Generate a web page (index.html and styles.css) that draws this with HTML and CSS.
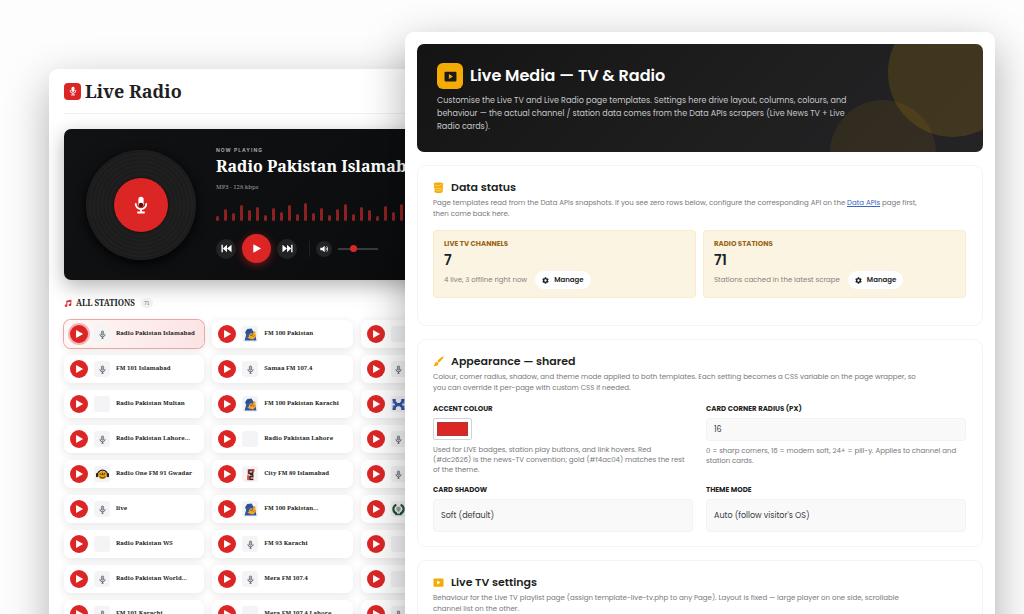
FILE: index.html
```html
<!DOCTYPE html>
<html lang="en">
<head>
  <meta charset="UTF-8" />
  <title>Live Media — TV &amp; Radio</title>
  <meta name="viewport" content="width=device-width, initial-scale=1.0"/>
  <link rel="stylesheet" href="styles.css">
</head>
<body>
  <!-- shared icons -->
  <svg class="sprite" aria-hidden="true">
    <symbol id="mic" viewBox="0 0 24 24"><rect x="8.5" y="1" width="7" height="13" rx="3.5" fill="currentColor"/><path d="M5 10.500a7 7 0 0 0 14 0M12 17.500V21M8 22h8" fill="none" stroke="currentColor" stroke-width="2.500" stroke-linecap="round"/><circle cx="12" cy="12" r="3" fill="#4a1717"/></symbol>
    <symbol id="mic-small" viewBox="0 0 24 24"><rect x="8.5" y="2" width="7" height="12" rx="3.5" fill="currentColor"/><path d="M5 10.500a7 7 0 0 0 14 0M12 17.500V21M8 21.500h8" fill="none" stroke="currentColor" stroke-width="2" stroke-linecap="round"/></symbol>
    <symbol id="mic-line" viewBox="0 0 24 24"><rect x="9" y="2.500" width="6" height="11.500" rx="3" fill="#a9adb4" stroke="currentColor" stroke-width="1.800"/><path d="M5 11a7 7 0 0 0 14 0M12 18v4M9 22h6" fill="none" stroke="currentColor" stroke-width="2.400"/></symbol>
    <symbol id="play" viewBox="0 0 24 24"><path d="M5 2.500v19L22 12z" fill="currentColor"/></symbol>
    <symbol id="prev" viewBox="0 0 24 24"><path d="M1 4h3v16H1zM13 4v16L4 12zM23 4v16l-10-8z" fill="currentColor"/></symbol>
    <symbol id="next" viewBox="0 0 24 24"><path d="M20 4h3v16h-3zM11 4v16l9-8zM1 4v16l10-8z" fill="currentColor"/></symbol>
    <symbol id="volume" viewBox="0 0 24 24"><path d="M1 8h6l7-6v20l-7-6H1z" fill="currentColor"/><path d="M17 8c2.500 2 2.500 6 0 8M20 4c4 4 4 12 0 16" fill="none" stroke="currentColor" stroke-width="2.500"/></symbol>
    <symbol id="music" viewBox="0 0 24 24"><path d="M7 5l15-3v15.500a4 3.500 0 1 1-3-3.400V8l-9 2v10a4 3.500 0 1 1-3-3.400z" fill="currentColor"/></symbol>
    <symbol id="tv" viewBox="0 0 24 24"><path fill-rule="evenodd" d="M3 3h18a2 2 0 0 1 2 2v14a2 2 0 0 1-2 2H3a2 2 0 0 1-2-2V5a2 2 0 0 1 2-2zm6 4.500v9l7.500-4.500z" fill="currentColor"/></symbol>
    <symbol id="gear" viewBox="0 0 24 24"><path fill-rule="evenodd" d="M9.500 1h5l.6 3 2.300 1.300 2.900-1 2.500 4.300L20.500 11v2l2.300 2.400-2.500 4.300-2.900-1-2.300 1.300-.6 3h-5l-.6-3-2.300-1.300-2.900 1-2.500-4.300L3.500 13v-2L1.200 8.600l2.500-4.300 2.900 1L8.900 4zM12 8a4 4 0 1 0 0 8 4 4 0 0 0 0-8z" fill="currentColor"/></symbol>
    <symbol id="database" viewBox="0 0 24 24"><path d="M1 4C2 1 20 0 23 4l-2 4 1 4-1 4v5c-1 4-17 4-18 0l1-5-2-4 1-4z" fill="#f4ac04"/><path d="M5 6l6 3 8-4M5 13c4 2 10 2 14 0M6 18c4 2 8 2 12 0" fill="none" stroke="#fff0c4" stroke-width="1.300"/></symbol>
    <symbol id="brush" viewBox="0 0 24 24"><path d="M22.500 1.500c1.500 1.500-5 9-9.500 13l-3.500-3.500c4-4.500 11.500-11 13-9.500zM8.500 12.500l3.500 3.500c0 5-6 7-11 6 3-2 2-8 7.500-9.500z" fill="#f4ac04"/></symbol>
    <symbol id="fm100" viewBox="0 0 24 24"><path d="M1 23l3-10-2-5 4-6 8-1 3 5 3 3 3 14z" fill="#2857a5"/><path d="M9 12l4-3 2 2 5-6 2 4-2 2 3 2-3 5-3 3-7-1-4-3 3-1z" fill="#f6a623"/><path d="M10 12l3 2 4-2M5 7l5-2M17 16l2-2" fill="none" stroke="#40342a" stroke-width="1.200"/></symbol>
    <symbol id="radio-one" viewBox="0 0 24 24"><path d="M3 13a9 9 0 0 1 18 0" fill="none" stroke="#222" stroke-width="2.500"/><ellipse cx="12" cy="13" rx="8.500" ry="7.500" fill="#e2a11c"/><rect x="0" y="9" width="4" height="8" rx="2" fill="#222"/><rect x="20" y="9" width="4" height="8" rx="2" fill="#222"/><path d="M7 10l3 3M14 13l3-4M7 16c3 3 7 3 10 0M12 9v4" fill="none" stroke="#4a3209" stroke-width="1.800"/></symbol>
    <symbol id="city89" viewBox="0 0 24 24"><path d="M6 2h13v5l-3 4 2 3v9H6z" fill="#f9a69c"/><path d="M17 4H9v6h7V6M11 12h5v4h-5v5h6" fill="none" stroke="#2b2b2b" stroke-width="2.600"/><path d="M6 14h3v8H6zM16 2h3v5h-3z" fill="#e23c2e"/></symbol>
    <symbol id="hum" viewBox="0 0 24 24"><path d="M1 2h6v4l3 3h4l3-3V2h6v4l-4 4v4l4 4v4h-6v-4l-3-3h-4l-3 3v4H1v-4l4-4v-4L1 6z" fill="#3557a8"/><path d="M1 9h4M1 15h4M19 9h4M19 15h4" stroke="#3557a8" stroke-width="2"/></symbol>
    <symbol id="crest" viewBox="0 0 24 24"><path d="M8 3C0 7 1 17 9 20M16 3c8 4 7 14-1 17" fill="none" stroke="#24543a" stroke-width="4"/><path d="M8 7h8v6l-4 4-4-4z" fill="#8fa697"/><path d="M6 21h12" stroke="#24543a" stroke-width="3"/></symbol>
  </svg>

  <div class="stage">
    <section class="radio">
      <header class="radio-head">
        <span class="radio-logo"><svg><use href="#mic-small"/></svg></span>
        <h1>Live Radio</h1>
      </header>

      <div class="player">
        <div class="disc"><div class="disc-label"><svg><use href="#mic"/></svg></div></div>
        <div class="player-info">
          <p class="now">NOW PLAYING</p>
          <h2>Radio Pakistan Islamabad</h2>
          <p class="bitrate">MP3 · 128 kbps</p>
          <div class="bars">
            <i style="height:5px"></i><i style="height:12px"></i><i style="height:8px"></i><i style="height:16px"></i><i style="height:11px"></i><i style="height:14px"></i><i style="height:6px"></i><i style="height:13px"></i><i style="height:9px"></i><i style="height:16px"></i><i style="height:7px"></i><i style="height:18px"></i><i style="height:8px"></i><i style="height:13px"></i><i style="height:6px"></i><i style="height:12px"></i><i style="height:17px"></i><i style="height:7px"></i><i style="height:14px"></i><i style="height:11px"></i><i style="height:5px"></i><i style="height:15px"></i><i style="height:9px"></i><i style="height:17px"></i>
          </div>
          <div class="controls">
            <button class="round" aria-label="Previous"><svg><use href="#prev"/></svg></button>
            <button class="round round-play" aria-label="Play"><svg><use href="#play"/></svg></button>
            <button class="round" aria-label="Next"><svg><use href="#next"/></svg></button>
            <span class="divider"></span>
            <button class="round round-small" aria-label="Mute"><svg><use href="#volume"/></svg></button>
            <input class="volume" type="range" min="0" max="100" value="35" aria-label="Volume">
          </div>
        </div>
      </div>

      <h3 class="stations-title"><svg><use href="#music"/></svg>ALL STATIONS <span>71</span></h3>
      <div class="stations">
        <div class="station active"><button aria-label="Play"><svg><use href="#play"/></svg></button><span class="thumb"><svg><use href="#mic-line"/></svg></span><b>Radio Pakistan Islamabad</b></div>
        <div class="station"><button aria-label="Play"><svg><use href="#play"/></svg></button><span class="thumb logo"><svg><use href="#fm100"/></svg></span><b>FM 100 Pakistan</b></div>
        <div class="station"><button aria-label="Play"><svg><use href="#play"/></svg></button><span class="thumb"></span></div>

        <div class="station"><button aria-label="Play"><svg><use href="#play"/></svg></button><span class="thumb"><svg><use href="#mic-line"/></svg></span><b>FM 101 Islamabad</b></div>
        <div class="station"><button aria-label="Play"><svg><use href="#play"/></svg></button><span class="thumb"><svg><use href="#mic-line"/></svg></span><b>Samaa FM 107.4</b></div>
        <div class="station"><button aria-label="Play"><svg><use href="#play"/></svg></button><span class="thumb"><svg><use href="#mic-line"/></svg></span></div>

        <div class="station"><button aria-label="Play"><svg><use href="#play"/></svg></button><span class="thumb"></span><b>Radio Pakistan Multan</b></div>
        <div class="station"><button aria-label="Play"><svg><use href="#play"/></svg></button><span class="thumb logo"><svg><use href="#fm100"/></svg></span><b>FM 100 Pakistan Karachi</b></div>
        <div class="station"><button aria-label="Play"><svg><use href="#play"/></svg></button><span class="thumb logo"><svg><use href="#hum"/></svg></span></div>

        <div class="station"><button aria-label="Play"><svg><use href="#play"/></svg></button><span class="thumb"><svg><use href="#mic-line"/></svg></span><b>Radio Pakistan Lahore...</b></div>
        <div class="station"><button aria-label="Play"><svg><use href="#play"/></svg></button><span class="thumb"></span><b>Radio Pakistan Lahore</b></div>
        <div class="station"><button aria-label="Play"><svg><use href="#play"/></svg></button><span class="thumb"><svg><use href="#mic-line"/></svg></span></div>

        <div class="station"><button aria-label="Play"><svg><use href="#play"/></svg></button><span class="thumb logo"><svg><use href="#radio-one"/></svg></span><b>Radio One FM 91 Gwadar</b></div>
        <div class="station"><button aria-label="Play"><svg><use href="#play"/></svg></button><span class="thumb logo"><svg><use href="#city89"/></svg></span><b>City FM 89 Islamabad</b></div>
        <div class="station"><button aria-label="Play"><svg><use href="#play"/></svg></button><span class="thumb"><svg><use href="#mic-line"/></svg></span></div>

        <div class="station"><button aria-label="Play"><svg><use href="#play"/></svg></button><span class="thumb"><svg><use href="#mic-line"/></svg></span><b>live</b></div>
        <div class="station"><button aria-label="Play"><svg><use href="#play"/></svg></button><span class="thumb logo"><svg><use href="#fm100"/></svg></span><b>FM 100 Pakistan...</b></div>
        <div class="station"><button aria-label="Play"><svg><use href="#play"/></svg></button><span class="thumb logo"><svg><use href="#crest"/></svg></span></div>

        <div class="station"><button aria-label="Play"><svg><use href="#play"/></svg></button><span class="thumb"></span><b>Radio Pakistan WS</b></div>
        <div class="station"><button aria-label="Play"><svg><use href="#play"/></svg></button><span class="thumb"><svg><use href="#mic-line"/></svg></span><b>FM 93 Karachi</b></div>
        <div class="station"><button aria-label="Play"><svg><use href="#play"/></svg></button><span class="thumb"></span></div>

        <div class="station"><button aria-label="Play"><svg><use href="#play"/></svg></button><span class="thumb"><svg><use href="#mic-line"/></svg></span><b>Radio Pakistan World...</b></div>
        <div class="station"><button aria-label="Play"><svg><use href="#play"/></svg></button><span class="thumb"><svg><use href="#mic-line"/></svg></span><b>Mera FM 107.4</b></div>
        <div class="station"><button aria-label="Play"><svg><use href="#play"/></svg></button><span class="thumb"></span></div>

        <div class="station"><button aria-label="Play"><svg><use href="#play"/></svg></button><span class="thumb"><svg><use href="#mic-line"/></svg></span><b>FM 101 Karachi</b></div>
        <div class="station"><button aria-label="Play"><svg><use href="#play"/></svg></button><span class="thumb"></span><b>Mera FM 107.4 Lahore</b></div>
        <div class="station"><button aria-label="Play"><svg><use href="#play"/></svg></button><span class="thumb"><svg><use href="#mic-line"/></svg></span></div>
      </div>
    </section>

    <main class="admin">
      <header class="hero">
        <div class="hero-title">
          <span class="hero-icon"><svg><use href="#tv"/></svg></span>
          <h1>Live Media — TV &amp; Radio</h1>
        </div>
        <p>Customise the Live TV and Live Radio page templates. Settings here drive layout, columns, colours, and<br>behaviour — the actual channel / station data comes from the Data APIs scrapers (Live News TV + Live<br>Radio cards).</p>
      </header>

      <section class="card card-status">
        <h2><svg><use href="#database"/></svg>Data status</h2>
        <p class="desc">Page templates read from the Data APIs snapshots. If you see zero rows below, configure the corresponding API on the <a href="#">Data APIs</a> page first,<br>then come back here.</p>
        <div class="stats">
          <div class="stat">
            <h3>LIVE TV CHANNELS</h3>
            <strong>7</strong>
            <div class="stat-foot">4 live, 3 offline right now <button><svg><use href="#gear"/></svg>Manage</button></div>
          </div>
          <div class="stat">
            <h3>RADIO STATIONS</h3>
            <strong>71</strong>
            <div class="stat-foot">Stations cached in the latest scrape <button><svg><use href="#gear"/></svg>Manage</button></div>
          </div>
        </div>
      </section>

      <section class="card">
        <h2><svg><use href="#brush"/></svg>Appearance — shared</h2>
        <p class="desc">Colour, corner radius, shadow, and theme mode applied to both templates. Each setting becomes a CSS variable on the page wrapper, so<br>you can override it per-page with custom CSS if needed.</p>
        <div class="fields">
          <div class="field">
            <label for="accent">ACCENT COLOUR</label>
            <input class="swatch" type="color" id="accent" value="#dc2626">
            <p>Used for LIVE badges, station play buttons, and link hovers. Red<br>(#dc2626) is the news-TV convention; gold (#f4ac04) matches the rest<br>of the theme.</p>
          </div>
          <div class="field">
            <label for="radius">CARD CORNER RADIUS (PX)</label>
            <input class="text" type="number" id="radius" value="16">
            <p>0 = sharp corners, 16 = modern soft, 24+ = pill-y. Applies to channel and<br>station cards.</p>
          </div>
          <div class="field">
            <label for="shadow">CARD SHADOW</label>
            <select id="shadow"><option>Soft (default)</option></select>
          </div>
          <div class="field">
            <label for="theme">THEME MODE</label>
            <select id="theme"><option>Auto (follow visitor's OS)</option></select>
          </div>
        </div>
      </section>

      <section class="card">
        <h2><svg><use href="#tv"/></svg>Live TV settings</h2>
        <p class="desc">Behaviour for the Live TV playlist page (assign template-live-tv.php to any Page). Layout is fixed — large player on one side, scrollable<br>channel list on the other.</p>
      </section>
    </main>
  </div>
</body>
</html>
```
FILE: styles.css
```css
* {
  box-sizing: border-box;
}
body {
  margin: 0;
  background: #fdfdfd;
  color: #1d1f23;
  font-family: Poppins, Inter, sans-serif;
}
h1, h2, h3, p {
  margin: 0;
}
svg {
  display: block;
}
button {
  padding: 0;
  border: none;
  font-family: inherit;
  cursor: pointer;
}
.sprite {
  display: none;
}
.stage {
  display: grid;
  grid-template-columns: 356fr 590fr;
  height: 100vh;
  padding: 32px 29px 0 49px;
  overflow: hidden;
}

/* radio page, partly behind the admin page */
.radio {
  margin: 37px -111px 0 0;
  padding: 0 15px;
  height: 640px;
  background: #fff;
  border-radius: 9px;
  box-shadow: 0 14px 44px rgba(0,0,0,0.3);
  font-family: "Noto Serif", "DejaVu Serif Condensed", "DejaVu Serif", serif;
}
.radio-head {
  display: flex;
  align-items: center;
  gap: 4px;
  height: 45px;
  border-bottom: 1px solid #f0f0f1;
}
.radio-head h1 {
  font-size: 18px;
  line-height: 24px;
}
.radio-logo {
  display: grid;
  place-items: center;
  width: 17px;
  height: 17px;
  background: #dc2626;
  border-radius: 4px;
  color: #fff;
}
.radio-logo svg {
  width: 10px;
  height: 10px;
}
.player {
  display: flex;
  align-items: center;
  gap: 20px;
  height: 151px;
  margin-top: 15px;
  padding: 0 22px;
  background: linear-gradient(135deg, #111214, #0a0b0d);
  border-radius: 7px;
  box-shadow: 0 6px 20px rgba(0,0,0,0.3);
  color: #fff;
  overflow: hidden;
}
.disc {
  display: grid;
  place-items: center;
  flex: none;
  width: 110px;
  height: 110px;
  border-radius: 50%;
  background: repeating-radial-gradient(circle, #1c1c1d 0 2px, #202021 3px 4px);
  box-shadow: 0 3px 12px #000;
}
.disc-label {
  display: grid;
  place-items: center;
  width: 56px;
  height: 56px;
  border-radius: 50%;
  background: #dc2626;
  border: 1px solid #111;
}
.disc-label svg {
  width: 18px;
  height: 18px;
}
.player-info {
  flex: none;
}
.now {
  font: bold 5px/8px Inter, sans-serif;
  letter-spacing: 1px;
  color: #a5a5a7;
}
.player h2 {
  margin-top: 1px;
  font-size: 16px;
  line-height: 22px;
}
.bitrate {
  margin-top: 6px;
  font-size: 6px;
  line-height: 8px;
  color: #9b9b9e;
}
.bars {
  display: flex;
  align-items: flex-end;
  gap: 5px;
  height: 30px;
}
.bars i {
  width: 3px;
  background: #8c2122;
  border-radius: 2px;
}
.controls {
  display: flex;
  align-items: center;
  gap: 6px;
  margin-top: 13px;
}
.round {
  display: grid;
  place-items: center;
  width: 20px;
  height: 20px;
  border-radius: 50%;
  background: #222325;
  color: #fff;
}
.round svg {
  width: 11px;
  height: 11px;
}
.round-play {
  width: 29px;
  height: 29px;
  background: #dc2626;
  box-shadow: 0 2px 8px rgba(220,38,38,0.5);
}
.divider {
  width: 1px;
  height: 16px;
  margin-left: 6px;
  background: #202124;
}
.round-small {
  width: 16px;
  height: 16px;
}
.round-small svg {
  width: 8px;
  height: 8px;
}
.volume {
  appearance: none;
  width: 40px;
  height: 2px;
  margin: 0;
  background: #3b3b3d;
}
.volume::-webkit-slider-thumb {
  appearance: none;
  width: 7px;
  height: 7px;
  border-radius: 50%;
  background: #dc2626;
}
.stations-title {
  display: flex;
  align-items: center;
  gap: 4px;
  margin: 17px 0 11px;
  font-size: 7px;
  line-height: 12px;
}
.stations-title svg {
  width: 8px;
  height: 8px;
  color: #dc2626;
}
.stations-title span {
  margin-left: 2px;
  padding: 0 3px;
  border-radius: 6px;
  background: #f0f0f1;
  font-size: 5px;
  line-height: 10px;
  font-weight: normal;
  color: #77787c;
}
.stations-title {
  font-size: 8px;
}
.stations {
  display: grid;
  grid-template-columns: repeat(3, 1fr);
  gap: 7px 8px;
}
.station {
  display: flex;
  align-items: center;
  gap: 6px;
  height: 28px;
  padding: 0 6px;
  background: #fff;
  border-radius: 7px;
  box-shadow: 0 2px 8px rgba(0,0,0,0.1);
}
.station.active {
  background: linear-gradient(100deg, #fff8f6, #fbe3e3);
  box-shadow: 0 0 0 1px #f0a5a5, 0 2px 8px rgba(0,0,0,0.1);
}
.station.active button {
  box-shadow: 0 0 0 2px #f3b5b5;
}
.station button {
  display: grid;
  place-items: center;
  flex: none;
  width: 18px;
  height: 18px;
  border-radius: 50%;
  background: #dc2626;
  color: #fff;
}
.station button svg {
  width: 10px;
  height: 10px;
}
.station b {
  padding-bottom: 2px;
  font-size: 6px;
  line-height: 10px;
  white-space: nowrap;
}
.thumb {
  display: grid;
  place-items: center;
  flex: none;
  width: 16px;
  height: 16px;
  border-radius: 3px;
  background: #f4f4f6;
  color: #5d6269;
}
.thumb svg {
  width: 9px;
  height: 9px;
}
.thumb.logo svg {
  width: 13px;
  height: 13px;
}

/* admin page */
.admin {
  position: relative;
  z-index: 1;
  height: 640px;
  padding: 12px;
  background: #fff;
  border-radius: 9px;
  box-shadow: 0 14px 44px rgba(0,0,0,0.32);
}
.hero {
  position: relative;
  height: 108px;
  padding: 19px 20px;
  border-radius: 7px;
  background: linear-gradient(135deg, #141414, #1f1f20 60%, #242427);
  color: #c7c7c9;
  overflow: hidden;
}
.hero::before, .hero::after {
  content: "";
  position: absolute;
  border-radius: 50%;
}
.hero::before {
  top: -36px;
  right: -34px;
  width: 129px;
  height: 129px;
  background: rgba(244,172,4,0.15);
}
.hero::after {
  right: 47px;
  bottom: -54px;
  width: 106px;
  height: 106px;
  background: rgba(244,172,4,0.08);
}
.hero-title {
  display: flex;
  align-items: center;
  gap: 7px;
}
.hero-title h1 {
  font-size: 16px;
  line-height: 26px;
  font-weight: 600;
  color: #fff;
}
.hero-icon {
  display: grid;
  place-items: center;
  width: 26px;
  height: 26px;
  border-radius: 6px;
  background: #f4ac04;
  color: #1a1a1a;
}
.hero-icon svg {
  width: 13px;
  height: 13px;
}
.hero p {
  margin-top: 5px;
  font-size: 8px;
  line-height: 13px;
  white-space: nowrap;
}
.card {
  margin-top: 13px;
  padding: 15px 16px 14px 15px;
  border: 1px solid #f4f4f5;
  border-radius: 9px;
}
.card-status {
  padding-bottom: 27px;
}
.card h2 {
  display: flex;
  align-items: center;
  gap: 7px;
  font-size: 11px;
  line-height: 12px;
  font-weight: 600;
}
.card h2 svg {
  width: 11px;
  height: 11px;
  color: #f4ac04;
}
.desc {
  margin-top: 4px;
  font-size: 7px;
  line-height: 11px;
  color: #77787c;
  white-space: nowrap;
}
.desc a {
  color: #3b63c4;
}
.stats {
  display: grid;
  grid-template-columns: 1fr 1fr;
  gap: 7px;
  margin-top: 11px;
}
.stat {
  height: 68px;
  padding: 8px 10px;
  background: #fbf4e3;
  border: 1px solid #f9ebcb;
  border-radius: 4px;
}
.stat h3 {
  font-size: 7px;
  line-height: 10px;
  color: #996515;
}
.stat strong {
  display: block;
  font-size: 14px;
  line-height: 22px;
  font-weight: 600;
}
.stat-foot {
  display: flex;
  align-items: center;
  gap: 8px;
  font-size: 7px;
  line-height: 18px;
  color: #85827b;
}
.stat-foot button {
  display: flex;
  align-items: center;
  gap: 5px;
  height: 18px;
  padding: 0 7px;
  background: #fff;
  border-radius: 9px;
  font-size: 7px;
  font-weight: 600;
  color: #1d1f23;
}
.stat-foot svg {
  width: 7px;
  height: 7px;
}
.fields {
  display: grid;
  grid-template-columns: 1fr 1fr;
  gap: 10px 13px;
  margin-top: 11px;
}
.field label {
  display: block;
  margin-bottom: 4px;
  font-size: 7px;
  line-height: 10px;
  font-weight: bold;
}
.field p {
  margin-top: 5px;
  font-size: 7px;
  line-height: 10px;
  color: #77787c;
  white-space: nowrap;
}
.swatch {
  appearance: none;
  display: block;
  width: 39px;
  height: 22px;
  padding: 3px;
  background: #fff;
  border: 1px solid #d3d3d5;
  border-radius: 2px;
}
.swatch::-webkit-color-swatch-wrapper {
  padding: 0;
}
.swatch::-webkit-color-swatch {
  border: 1px solid #a83a3a;
}
.text, select {
  appearance: none;
  display: block;
  width: 100%;
  padding: 0 7px;
  background: #f9f9f9;
  border: 1px solid #f2f2f3;
  border-radius: 4px;
  font-family: inherit;
  font-size: 8px;
  color: #3a3b3f;
}
.text {
  height: 23px;
}
select {
  height: 33px;
}
```
